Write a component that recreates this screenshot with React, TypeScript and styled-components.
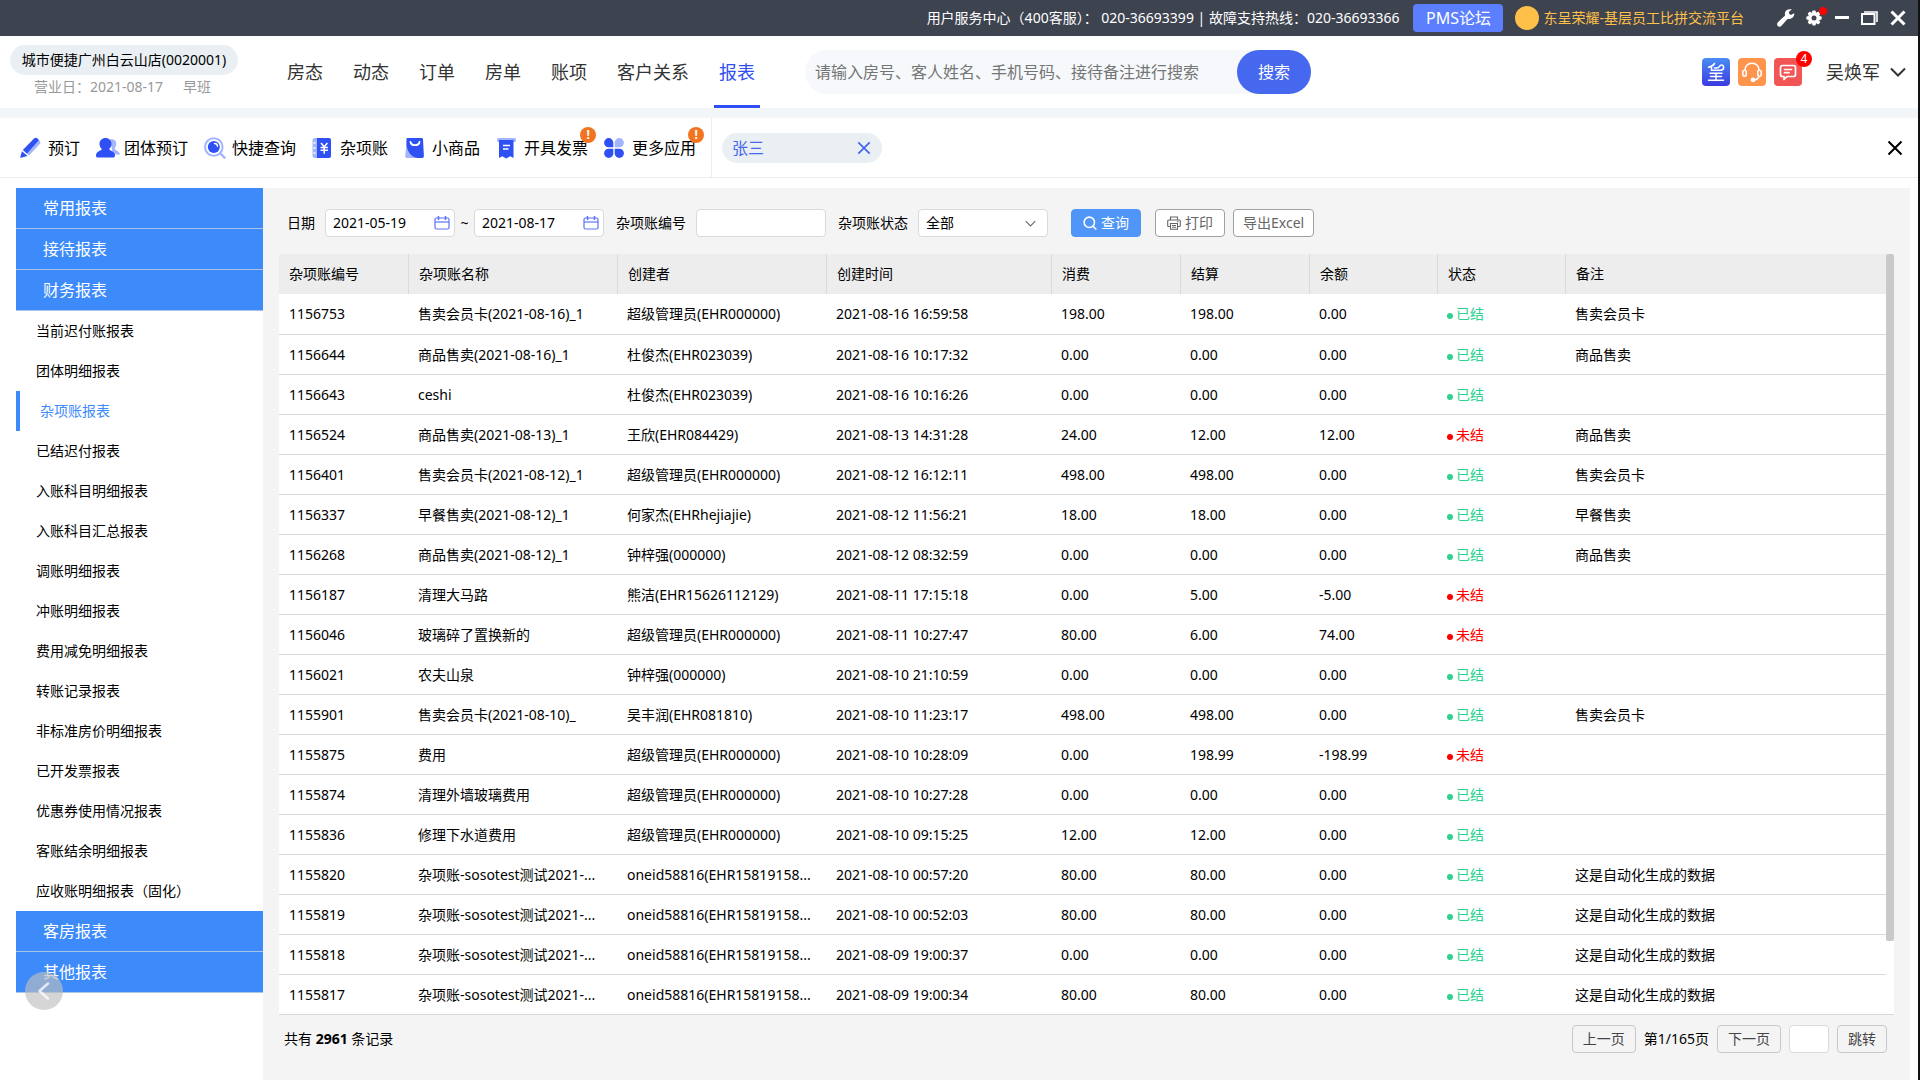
import React from "react";
import styled, { createGlobalStyle } from "styled-components";

const GlobalStyle = createGlobalStyle`
  *, *::before, *::after { box-sizing: border-box; }
  body {
    margin: 0;
    background: #fff;
    color: #000;
    font-family: "Noto Sans", "Noto Sans CJK SC", sans-serif;
    font-size: 14px;
    line-height: 20px;
  }
  button, input, select { font: inherit; color: inherit; }
  button { cursor: pointer; }
  a { color: inherit; text-decoration: none; }
  svg { display: block; flex: none; }
`;

const Shell = styled.div`
  display: flex;
  flex-direction: column;
  min-height: 100vh;
  border-right: 2px solid #111;
`;

/* ---------- title bar ---------- */

const TitleBar = styled.header`
  display: flex;
  align-items: center;
  justify-content: flex-end;
  height: 36px;
  padding-right: 10px;
  background: #3e4350;
  color: #fff;
  white-space: nowrap;
`;

const ForumButton = styled.button`
  height: 28px;
  margin: 0 12px 0 14px;
  padding: 0 10px;
  width: 90px;
  border: 0;
  border-radius: 4px;
  background: #5b7fff;
  font-size: 16px;
  line-height: 24px;
`;

const HonorLink = styled.a`
  display: flex;
  align-items: center;
  gap: 4px;
  color: #ffc04a;

  &::before {
    content: "";
    width: 24px;
    height: 24px;
    border-radius: 50%;
    background: #ffc04a;
  }
`;

const WindowTools = styled.div`
  display: flex;
  align-items: center;
  gap: 8px;
  margin-left: 32px;
`;

const BareButton = styled.button`
  position: relative;
  display: grid;
  place-items: center;
  min-width: 20px;
  padding: 0;
  border: 0;
  background: none;
`;

const RedDot = styled.span`
  position: absolute;
  top: -3px;
  right: -3px;
  width: 8px;
  height: 8px;
  border-radius: 50%;
  background: #f00;
`;

/* ---------- main navigation ---------- */

const NavBar = styled.div`
  display: flex;
  align-items: center;
  height: 72px;
  padding: 0 12px 0 10px;
  white-space: nowrap;
`;

const Hotel = styled.div`
  width: 228px;
  text-align: center;
`;

const HotelName = styled.div`
  height: 30px;
  border-radius: 15px;
  background: #e9eff2;
  line-height: 30px;
`;

const BusinessDay = styled.div`
  display: flex;
  gap: 20px;
  padding-left: 24px;
  line-height: 24px;
  color: #999;
`;

const Menu = styled.nav`
  display: flex;
  align-self: stretch;
  gap: 20px;
  margin-left: 44px;
`;

const MenuLink = styled.a<{ $active?: boolean }>`
  display: flex;
  align-items: center;
  padding: 3px 5px 0;
  border-bottom: 3px solid ${(p) => (p.$active ? "#304ef2" : "transparent")};
  color: ${(p) => (p.$active ? "#304ef2" : "#333")};
  font-size: 18px;
  line-height: 26px;
`;

const SearchBox = styled.form`
  display: flex;
  width: 506px;
  height: 44px;
  margin-left: 45px;
  border-radius: 22px;
  background: #f6f8fb;
`;

const SearchInput = styled.input`
  flex: 1;
  min-width: 0;
  padding: 0 10px;
  border: 0;
  background: none;
  font-size: 16px;
  &::placeholder { color: #757575; opacity: 1; }
`;

const SearchButton = styled.button`
  width: 74px;
  border: 0;
  border-radius: 22px;
  background: #4668ee;
  color: #fff;
  font-size: 16px;
`;

const UserArea = styled.div`
  display: flex;
  align-items: center;
  gap: 8px;
  margin-left: auto;
`;

const AppTile = styled.button<{ $bg: string }>`
  position: relative;
  display: grid;
  place-items: center;
  width: 28px;
  height: 28px;
  padding: 0;
  border: 0;
  border-radius: 4px;
  background: ${(p) => p.$bg};
`;

const Count = styled.span`
  position: absolute;
  top: -7px;
  right: -10px;
  width: 16px;
  height: 16px;
  border-radius: 50%;
  background: #f00;
  color: #fff;
  font-size: 12px;
  line-height: 16px;
`;

const UserButton = styled.button`
  display: flex;
  align-items: center;
  gap: 10px;
  padding: 0;
  margin-left: 16px;
  border: 0;
  background: none;
  color: #333;
  font-size: 18px;
  line-height: 26px;
`;

/* ---------- tool bar ---------- */

const ToolBar = styled.div`
  display: flex;
  align-items: center;
  height: 70px;
  border-top: 10px solid #f3f6f8;
  border-bottom: 1px solid #ececec;
  padding-right: 13px;
`;

const Tools = styled.div`
  display: flex;
  align-self: stretch;
  align-items: center;
  gap: 16px;
  padding: 0 15px 0 20px;
  border-right: 1px solid #ececec;
  white-space: nowrap;
`;

const ToolButton = styled.button`
  position: relative;
  display: grid;
  grid-template-columns: 24px auto;
  align-items: center;
  column-gap: 4px;
  padding: 0;
  border: 0;
  background: none;
  font-size: 16px;
  line-height: 24px;
`;

const Alert = styled.span`
  position: absolute;
  top: -9px;
  right: -8px;
  width: 16px;
  height: 16px;
  border-radius: 50%;
  background: #f27421;
  color: #fff;
  font-size: 12px;
  font-weight: 700;
  line-height: 16px;
  text-align: center;
`;

const Tag = styled.div`
  display: flex;
  align-items: center;
  justify-content: space-between;
  width: 160px;
  height: 30px;
  margin-left: 10px;
  padding: 0 8px 0 10px;
  border-radius: 15px;
  background: #e9eff2;
  color: #4668ee;
  font-size: 16px;
`;

const CloseAll = styled(BareButton)`
  margin-left: auto;
`;

/* ---------- body ---------- */

const Body = styled.div`
  display: flex;
  flex: 1;
  padding: 10px 8px 0 16px;
`;

const Sidebar = styled.aside`
  position: relative;
  width: 247px;
  flex: none;
`;

const GroupButton = styled.button`
  display: block;
  width: 100%;
  height: 41px;
  padding: 0 27px;
  border: 0;
  border-bottom: 1px solid #a9c4e6;
  background: #3d8bfa;
  color: #fff;
  font-size: 16px;
  text-align: left;
`;

const ReportLink = styled.a<{ $active?: boolean }>`
  display: block;
  height: 40px;
  padding-left: ${(p) => (p.$active ? 20 : 16)}px;
  border-left: 4px solid ${(p) => (p.$active ? "#3d8bfa" : "transparent")};
  color: ${(p) => (p.$active ? "#3d8bfa" : "#000")};
  line-height: 40px;
`;

const BackButton = styled.button`
  position: absolute;
  top: 784px;
  left: 9px;
  display: grid;
  place-items: center;
  width: 38px;
  height: 38px;
  padding: 0;
  border: 0;
  border-radius: 50%;
  background: rgba(190, 190, 190, 0.65);
`;

const Content = styled.main`
  flex: 1;
  min-width: 0;
  padding: 21px 16px 0;
  background: #f4f4f4;
`;

const Filters = styled.form`
  display: flex;
  align-items: center;
  height: 28px;
  margin-bottom: 17px;
  padding-left: 8px;
  white-space: nowrap;
`;

const Field = styled.div`
  display: flex;
  align-items: center;
  gap: 10px;
  margin-right: 12px;
`;

const Tilde = styled.span`
  width: 19px;
  margin: 0 -10px;
  text-align: center;
`;

const Control = styled.span<{ $select?: boolean }>`
  display: flex;
  align-items: center;
  width: 130px;
  height: 28px;
  padding: 0 ${(p) => (p.$select ? 11 : 4)}px 0 7px;
  border: 1px solid #dadada;
  border-radius: 4px;
  background: #fff;
`;

const BareInput = styled.input`
  flex: 1;
  width: 100%;
  min-width: 0;
  padding: 0;
  border: 0;
  outline: 0;
  background: none;
`;

const BareSelect = styled.select`
  flex: 1;
  min-width: 0;
  padding: 0;
  border: 0;
  outline: 0;
  background: none;
  appearance: none;
`;

const ActionButton = styled.button<{ $primary?: boolean }>`
  display: flex;
  align-items: center;
  justify-content: center;
  gap: 4px;
  height: 28px;
  min-width: 70px;
  margin-left: ${(p) => (p.$primary ? 11 : 0)}px;
  margin-right: ${(p) => (p.$primary ? 14 : 8)}px;
  padding: 0 9px;
  border: 1px solid ${(p) => (p.$primary ? "#5095f8" : "#a0a0a0")};
  border-radius: 4px;
  background: ${(p) => (p.$primary ? "#5095f8" : "#fff")};
  color: ${(p) => (p.$primary ? "#fff" : "#666")};
`;

const TableArea = styled.div`
  display: flex;
  border-bottom: 1px solid #d9d9d9;
  background: #fff;
`;

const Table = styled.table`
  flex: 1;
  min-width: 0;
  border-collapse: separate;
  border-spacing: 0;
  table-layout: fixed;
`;

const Th = styled.th`
  height: 40px;
  padding: 0 10px;
  border-right: 1px solid #dadada;
  background: #ededed;
  font-weight: 400;
  text-align: left;
  &:last-child { border-right: 0; }
`;

const Tr = styled.tr`
  &:first-child td { height: 41px; }
  &:last-child td { height: 39px; border-bottom: 0; }
`;

const Td = styled.td`
  height: 40px;
  padding: 0 0 0 9px;
  border-bottom: 1px solid #d9d9d9;
  white-space: nowrap;
  overflow: hidden;
  &:first-child { padding-left: 10px; }
`;

const Status = styled.span<{ $open: boolean }>`
  display: flex;
  align-items: center;
  gap: 3px;
  color: ${(p) => (p.$open ? "#f00" : "#2fd190")};

  &::before {
    content: "";
    width: 6px;
    height: 6px;
    margin-top: 4px;
    border-radius: 50%;
    background: currentColor;
  }
`;

const ScrollThumb = styled.div`
  width: 8px;
  height: 687px;
  border-radius: 2px;
  background: #c9c9c9;
`;

const Footer = styled.footer`
  display: flex;
  align-items: center;
  justify-content: space-between;
  padding: 10px 7px 0 5px;
`;

const Pager = styled.div`
  display: flex;
  align-items: center;
  gap: 8px;
`;

const PageButton = styled.button`
  height: 28px;
  padding: 0 10px;
  border: 1px solid #c8c8c8;
  border-radius: 4px;
  background: #f4f4f4;
  color: #444;
`;

const PageInput = styled.input`
  width: 40px;
  height: 28px;
  padding: 0 4px;
  border: 1px solid #dadada;
  border-radius: 4px;
  background: #fff;
`;

/* ---------- icons ---------- */

const DARK = "#2f50f3";
const LIGHT = "#a3b5fd";

const Cross = ({ size, width = 2 }: { size: number; width?: number }) => (
  <svg width={size} height={size} viewBox="0 0 16 16" fill="none" stroke="currentColor" strokeWidth={width}>
    <path d="M1.5 1.5l13 13M14.5 1.5l-13 13" />
  </svg>
);

const Chevron = ({ size, width, color }: { size: number; width: number; color: string }) => (
  <svg width={size} height={size} viewBox="0 0 16 16" fill="none" stroke={color} strokeWidth={width}>
    <path d="M1 4.5l7 7 7-7" />
  </svg>
);

const Wrench = () => (
  <svg width="18" height="18" viewBox="0 0 18 18" fill="#fff">
    <path d="M17.2 4.2l-3.3 1.9-2-1.5.3-2.1L14.9.6C12.2-.5 9 .7 8.1 3.3c-.4 1.2-.3 2.3 0 3.2L.9 13.2c-1.100 1.100-1.100 2.700-.1 3.700s2.700 1 3.700-.1l6.300-7.100c1.200.4 2.600.3 3.800-.4 2.100-1.100 3-3.300 2.600-5.100z" />
  </svg>
);

const Gear = () => (
  <svg width="16" height="16" viewBox="0 0 16 16">
    <g fill="#fff">
      <circle cx="8" cy="8" r="6" />
      {[0, 45, 90, 135].map((a) => (
        <rect key={a} x="6.2" y="0.4" width="3.6" height="15.2" rx="1" transform={`rotate(${a} 8 8)`} />
      ))}
    </g>
    <circle cx="8" cy="8" r="2.5" fill="#3e4350" />
  </svg>
);

const Minimise = () => (
  <svg width="16" height="16" viewBox="0 0 16 16" stroke="#fff" strokeWidth="3">
    <path d="M1 7.5h14" />
  </svg>
);

const Restore = () => (
  <svg width="18" height="16" viewBox="0 0 18 16" fill="none" stroke="#fff">
    <rect x="1" y="4" width="12.5" height="10" strokeWidth="2" />
    <path d="M3 2h13v10" strokeWidth="1.6" />
  </svg>
);

const Brand = () => (
  <svg width="20" height="20" viewBox="0 0 20 20" fill="none" stroke="#fff" strokeWidth="1.5" strokeLinecap="round" strokeLinejoin="round">
    <path d="M8.500 1.500C7 4 5 5 2.500 5.200M5.500 4v4.300h9c4 0 4-5.300 1-5.300-2.500 0-1.500 3-4.500 3H8.500" />
    <path d="M4 11.200h12M4.500 14.500h11M2.500 18.200h15M10 11.500v6.500" />
  </svg>
);

const Headset = () => (
  <svg width="22" height="22" viewBox="0 0 22 22" fill="none" stroke="#fff" strokeWidth="1.6">
    <path d="M4 9.5C4 5 7 2.2 11 2.2S18 5 18 9.5" />
    <rect x="1.8" y="9.2" width="3.4" height="6" rx="1.7" />
    <rect x="16.8" y="9.2" width="3.4" height="6" rx="1.7" />
    <path d="M18 15c-.6 2.5-2.5 3.8-5 4" />
    <circle cx="12" cy="18.8" r="1.6" fill="#fff" />
  </svg>
);

const Message = () => (
  <svg width="20" height="20" viewBox="0 0 20 20" fill="none" stroke="#fff" strokeWidth="1.7" strokeLinecap="round" strokeLinejoin="round">
    <path d="M4.5 3.5h11a2 2 0 0 1 2 2v7a2 2 0 0 1-2 2H9l-3 3v-3H4.5a2 2 0 0 1-2-2v-7a2 2 0 0 1 2-2z" />
    <path d="M6.5 7.5h7M6.5 10.7h4.5" />
  </svg>
);

const Pencil = () => (
  <svg width="22" height="22" viewBox="0 0 22 22">
    <path d="M16.600 1.400l3.200 2.700c.9.8.9 1.900.2 2.700L9 18.500 5 15z" fill={LIGHT} />
    <path d="M14.300 1.300c.8-.8 2-.8 2.800-.1L19 3 7 16.500 2.800 13z" fill={DARK} />
    <path d="M2 14.200l5.500 4.700L1 20.800c-.7.200-.9-.2-.7-.8z" fill={DARK} />
  </svg>
);

const People = () => (
  <svg width="24" height="22" viewBox="0 0 24 22">
    <path d="M14 2.5c4-.8 6.8 1.6 6.2 5.2-.3 1.9-1.500 3.200-1.500 4.300 1.300 1.500 5.300 2.600 5.300 5.500h-7z" fill={LIGHT} />
    <path d="M9.5 1c3.600 0 6 2.500 6 6 0 2.300-1.200 4-2.500 5.200 1.800 1.600 6 2.600 6 6.300 0 1.400-.7 2-2 2H2c-1.300 0-2-.6-2-2 0-3.700 4.200-4.700 6-6.300C4.700 11 3.500 9.300 3.500 7c0-3.500 2.400-6 6-6z" fill={DARK} />
  </svg>
);

const Lens = () => (
  <svg width="22" height="22" viewBox="0 0 22 22" fill="none">
    <circle cx="9.8" cy="10" r="8.8" stroke={LIGHT} strokeWidth="2" />
    <path d="M16.5 16.5l4 4.2" stroke={LIGHT} strokeWidth="2.4" strokeLinecap="round" />
    <circle cx="9.8" cy="10" r="6" fill={DARK} />
    <path d="M10.5 6.5c1.7 0 3 1.2 3 2.8" stroke="#fff" strokeWidth="1.5" strokeLinecap="round" />
  </svg>
);

const Ledger = () => (
  <svg width="20" height="22" viewBox="0 0 20 22">
    <rect x="0.5" y="1" width="8" height="20" rx="2" fill={LIGHT} />
    <path d="M5 1h12a2 2 0 0 1 2 2v16a2 2 0 0 1-2 2H5z" fill={DARK} />
    <path d="M1.5 6h2M1.5 11h2M1.5 16h2" stroke="#fff" strokeWidth="1.5" />
    <path d="M9 6l3.200 3.800L15.400 6M8.500 10.500h7.400M8.500 13.300h7.400M12.200 10v6.800" stroke="#fff" strokeWidth="1.5" fill="none" />
  </svg>
);

const Bag = () => (
  <svg width="20" height="22" viewBox="-1 0 20 22">
    <path d="M2 1.500L.2 19c-.1 1.300.5 2 1.800 2h9z" fill={LIGHT} />
    <path d="M2.300 1h14.400a1.300 1.300 0 0 1 1.300 1.300L18.900 19c0 1.300-.6 2-1.900 2h-5C5.500 19.500 2.300 14 1.500 8V2c0-.6.300-1 .8-1z" fill={DARK} />
    <path d="M5.500 5c.7 4.200 8.300 4.200 9 0" fill="none" stroke="#fff" strokeWidth="1.8" strokeLinecap="round" />
  </svg>
);

const Invoice = () => (
  <svg width="20" height="22" viewBox="-1 0 20 22">
    <rect x="0" y="1" width="19" height="4" rx="1.5" fill={LIGHT} />
    <path d="M2 3h14.500v18l-3.200-1.800-4 2.300-4-2.300L2 21z" fill={DARK} />
    <path d="M6 8.500h7M6 12h5.500" stroke="#fff" strokeWidth="1.7" />
  </svg>
);

const Clover = () => (
  <svg width="20" height="20" viewBox="0 0 20 20">
    <path d="M9.300 9.300H4.600A4.600 4.600 0 1 1 9.300 4.600z" fill={DARK} />
    <path d="M10.700 9.300h4.700a4.600 4.600 0 1 0-4.700-4.700z" fill={LIGHT} />
    <path d="M9.300 10.700H4.600a4.600 4.600 0 1 0 4.700 4.700z" fill={DARK} />
    <path d="M10.700 10.700h4.700a4.600 4.600 0 1 1-4.700 4.700z" fill={DARK} />
  </svg>
);

const Calendar = () => (
  <svg width="16" height="16" viewBox="0 0 16 16" fill="none" stroke="#5c74f5">
    <rect x="1" y="3" width="14" height="11" rx="1.5" strokeWidth="1.2" />
    <path d="M1 7h14" strokeWidth="1.2" />
    <path d="M4.5 1v4M11.5 1v4" strokeWidth="1.5" />
  </svg>
);

const Magnifier = () => (
  <svg width="14" height="14" viewBox="0 0 14 14" fill="none" stroke="currentColor" strokeWidth="1.6">
    <circle cx="6.3" cy="6.3" r="5.2" />
    <path d="M10 10.300l3.300 3.200" />
  </svg>
);

const Printer = () => (
  <svg width="14" height="14" viewBox="0 0 14 14" fill="none" stroke="currentColor" strokeWidth="1.1">
    <path d="M3.500 4V1h7v3" />
    <path d="M3.500 10.500H1.500a.8.800 0 0 1-.8-.8V5a1 1 0 0 1 1-1h10.600a1 1 0 0 1 1 1v4.700a.8.800 0 0 1-.8.8h-2" />
    <path d="M3.500 7.500h7v5.800h-7zM5 9.500h4M5 11.300h4M10 5.800h1.500" />
  </svg>
);

/* ---------- data ---------- */

const menu = ["房态", "动态", "订单", "房单", "账项", "客户关系", "报表"];

const tools = [
  { label: "预订", icon: <Pencil /> },
  { label: "团体预订", icon: <People /> },
  { label: "快捷查询", icon: <Lens /> },
  { label: "杂项账", icon: <Ledger /> },
  { label: "小商品", icon: <Bag /> },
  { label: "开具发票", icon: <Invoice />, alert: true },
  { label: "更多应用", icon: <Clover />, alert: true },
];

const reports = [
  "当前迟付账报表", "团体明细报表", "杂项账报表", "已结迟付报表", "入账科目明细报表",
  "入账科目汇总报表", "调账明细报表", "冲账明细报表", "费用减免明细报表", "转账记录报表",
  "非标准房价明细报表", "已开发票报表", "优惠券使用情况报表", "客账结余明细报表", "应收账明细报表（固化）",
];

const columns = [
  { title: "杂项账编号", width: 130 },
  { title: "杂项账名称", width: 209 },
  { title: "创建者", width: 209 },
  { title: "创建时间", width: 225 },
  { title: "消费", width: 129 },
  { title: "结算", width: 129 },
  { title: "余额", width: 128 },
  { title: "状态", width: 128 },
  { title: "备注" },
];

const admin = "超级管理员(EHR000000)";
const robot = "oneid58816(EHR15819158...";
const autoName = "杂项账-sosotest测试2021-...";
const autoNote = "这是自动化生成的数据";

const rows: [string, string, string, string, string, string, string, string, string][] = [
  ["1156753", "售卖会员卡(2021-08-16)_1", admin, "2021-08-16 16:59:58", "198.00", "198.00", "0.00", "已结", "售卖会员卡"],
  ["1156644", "商品售卖(2021-08-16)_1", "杜俊杰(EHR023039)", "2021-08-16 10:17:32", "0.00", "0.00", "0.00", "已结", "商品售卖"],
  ["1156643", "ceshi", "杜俊杰(EHR023039)", "2021-08-16 10:16:26", "0.00", "0.00", "0.00", "已结", ""],
  ["1156524", "商品售卖(2021-08-13)_1", "王欣(EHR084429)", "2021-08-13 14:31:28", "24.00", "12.00", "12.00", "未结", "商品售卖"],
  ["1156401", "售卖会员卡(2021-08-12)_1", admin, "2021-08-12 16:12:11", "498.00", "498.00", "0.00", "已结", "售卖会员卡"],
  ["1156337", "早餐售卖(2021-08-12)_1", "何家杰(EHRhejiajie)", "2021-08-12 11:56:21", "18.00", "18.00", "0.00", "已结", "早餐售卖"],
  ["1156268", "商品售卖(2021-08-12)_1", "钟梓强(000000)", "2021-08-12 08:32:59", "0.00", "0.00", "0.00", "已结", "商品售卖"],
  ["1156187", "清理大马路", "熊洁(EHR15626112129)", "2021-08-11 17:15:18", "0.00", "5.00", "-5.00", "未结", ""],
  ["1156046", "玻璃碎了置换新的", admin, "2021-08-11 10:27:47", "80.00", "6.00", "74.00", "未结", ""],
  ["1156021", "农夫山泉", "钟梓强(000000)", "2021-08-10 21:10:59", "0.00", "0.00", "0.00", "已结", ""],
  ["1155901", "售卖会员卡(2021-08-10)_", "吴丰润(EHR081810)", "2021-08-10 11:23:17", "498.00", "498.00", "0.00", "已结", "售卖会员卡"],
  ["1155875", "费用", admin, "2021-08-10 10:28:09", "0.00", "198.99", "-198.99", "未结", ""],
  ["1155874", "清理外墙玻璃费用", admin, "2021-08-10 10:27:28", "0.00", "0.00", "0.00", "已结", ""],
  ["1155836", "修理下水道费用", admin, "2021-08-10 09:15:25", "12.00", "12.00", "0.00", "已结", ""],
  ["1155820", autoName, robot, "2021-08-10 00:57:20", "80.00", "80.00", "0.00", "已结", autoNote],
  ["1155819", autoName, robot, "2021-08-10 00:52:03", "80.00", "80.00", "0.00", "已结", autoNote],
  ["1155818", autoName, robot, "2021-08-09 19:00:37", "0.00", "0.00", "0.00", "已结", autoNote],
  ["1155817", autoName, robot, "2021-08-09 19:00:34", "80.00", "80.00", "0.00", "已结", autoNote],
];

export default function App() {
  return (
    <Shell>
      <GlobalStyle />
      <TitleBar>
        <span>用户服务中心（400客服）： 020-36693399 | 故障支持热线：020-36693366</span>
        <ForumButton type="button">PMS论坛</ForumButton>
        <HonorLink href="#">东呈荣耀-基层员工比拼交流平台</HonorLink>
        <WindowTools>
          <BareButton type="button" aria-label="工具"><Wrench /></BareButton>
          <BareButton type="button" aria-label="设置"><Gear /><RedDot /></BareButton>
          <BareButton type="button" aria-label="最小化"><Minimise /></BareButton>
          <BareButton type="button" aria-label="还原"><Restore /></BareButton>
          <BareButton type="button" aria-label="关闭"><Cross size={16} width={3} /></BareButton>
        </WindowTools>
      </TitleBar>

      <NavBar>
        <Hotel>
          <HotelName>城市便捷广州白云山店(0020001)</HotelName>
          <BusinessDay><span>营业日：2021-08-17</span><span>早班</span></BusinessDay>
        </Hotel>
        <Menu>
          {menu.map((m) => <MenuLink key={m} href="#" $active={m === "报表"}>{m}</MenuLink>)}
        </Menu>
        <SearchBox>
          <SearchInput aria-label="搜索" placeholder="请输入房号、客人姓名、手机号码、接待备注进行搜索" />
          <SearchButton type="button">搜索</SearchButton>
        </SearchBox>
        <UserArea>
          <AppTile type="button" aria-label="东呈" $bg="linear-gradient(#4a8cf5, #3b3be0)"><Brand /></AppTile>
          <AppTile type="button" aria-label="客服" $bg="#ff944d"><Headset /></AppTile>
          <AppTile type="button" aria-label="消息" $bg="#f25555"><Message /><Count>4</Count></AppTile>
          <UserButton type="button">吴焕军<Chevron size={16} width={2} color="#333" /></UserButton>
        </UserArea>
      </NavBar>

      <ToolBar>
        <Tools>
          {tools.map((t) => (
            <ToolButton key={t.label} type="button">
              {t.icon}
              {t.label}
              {t.alert && <Alert>!</Alert>}
            </ToolButton>
          ))}
        </Tools>
        <Tag>
          张三
          <BareButton type="button" aria-label="移除"><Cross size={14} width={2} /></BareButton>
        </Tag>
        <CloseAll type="button" aria-label="关闭页面"><Cross size={16} width={2} /></CloseAll>
      </ToolBar>

      <Body>
        <Sidebar>
          <GroupButton type="button">常用报表</GroupButton>
          <GroupButton type="button">接待报表</GroupButton>
          <GroupButton type="button">财务报表</GroupButton>
          {reports.map((r) => <ReportLink key={r} href="#" $active={r === "杂项账报表"}>{r}</ReportLink>)}
          <GroupButton type="button">客房报表</GroupButton>
          <GroupButton type="button">其他报表</GroupButton>
          <BackButton type="button" aria-label="返回">
            <svg width="18" height="18" viewBox="0 0 18 18" fill="none" stroke="#fff" strokeOpacity="0.75" strokeWidth="2.5" strokeLinecap="round" strokeLinejoin="round">
              <path d="M13 1.500L4.500 9l8.500 7.500" />
            </svg>
          </BackButton>
        </Sidebar>

        <Content>
          <Filters>
            <Field>
              <label htmlFor="from">日期</label>
              <Control><BareInput id="from" defaultValue="2021-05-19" /><Calendar /></Control>
              <Tilde>~</Tilde>
              <Control><BareInput aria-label="结束日期" defaultValue="2021-08-17" /><Calendar /></Control>
            </Field>
            <Field>
              <label htmlFor="number">杂项账编号</label>
              <Control><BareInput id="number" /></Control>
            </Field>
            <Field>
              <label htmlFor="state">杂项账状态</label>
              <Control $select>
                <BareSelect id="state" defaultValue="全部">
                  <option>全部</option>
                  <option>已结</option>
                  <option>未结</option>
                </BareSelect>
                <Chevron size={11} width={1.5} color="#666" />
              </Control>
            </Field>
            <ActionButton type="button" $primary><Magnifier />查询</ActionButton>
            <ActionButton type="button"><Printer />打印</ActionButton>
            <ActionButton type="button">导出Excel</ActionButton>
          </Filters>

          <TableArea>
            <Table>
              <colgroup>
                {columns.map((c) => <col key={c.title} width={c.width} />)}
              </colgroup>
              <thead>
                <tr>{columns.map((c) => <Th key={c.title} scope="col">{c.title}</Th>)}</tr>
              </thead>
              <tbody>
                {rows.map((row) => (
                  <Tr key={row[0]}>
                    {row.map((cell, i) => (
                      <Td key={i}>{i === 7 ? <Status $open={cell === "未结"}>{cell}</Status> : cell}</Td>
                    ))}
                  </Tr>
                ))}
              </tbody>
            </Table>
            <ScrollThumb />
          </TableArea>

          <Footer>
            <span>共有 <strong>2961</strong> 条记录</span>
            <Pager>
              <PageButton type="button">上一页</PageButton>
              <span>第1/165页</span>
              <PageButton type="button">下一页</PageButton>
              <PageInput aria-label="页码" />
              <PageButton type="button">跳转</PageButton>
            </Pager>
          </Footer>
        </Content>
      </Body>
    </Shell>
  );
}
